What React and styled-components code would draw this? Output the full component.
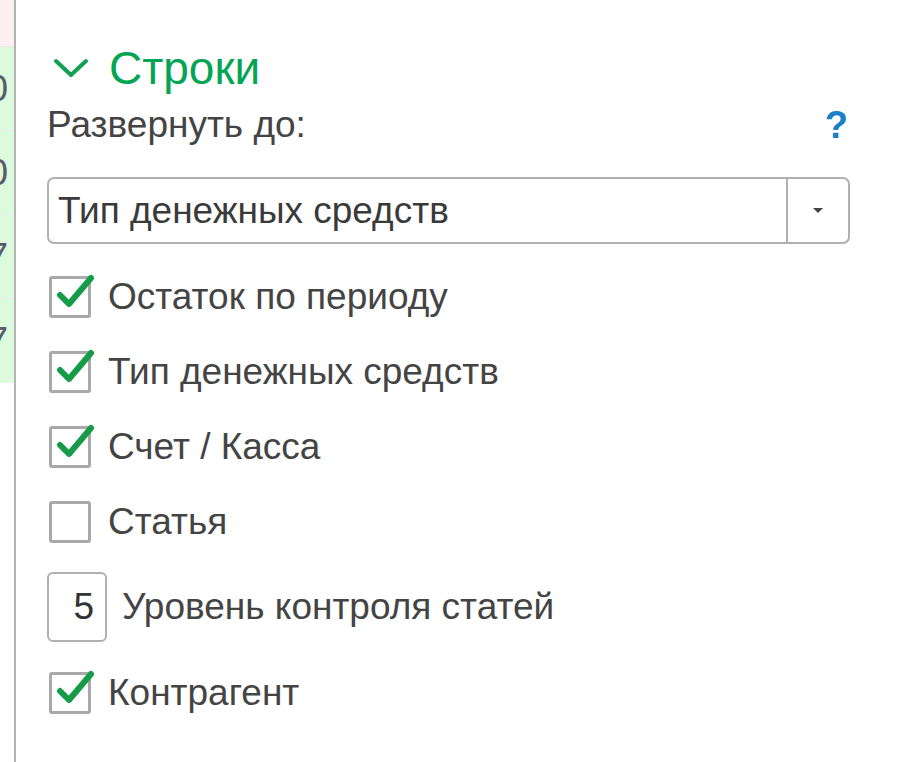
import React from 'react';
import styled, { createGlobalStyle } from 'styled-components';

const Global = createGlobalStyle`
  html, body {
    margin: 0;
    padding: 0;
    background: #fff;
  }
  body {
    font-family: "Liberation Sans", Arial, sans-serif;
    color: #444;
  }
`;

const Page = styled.div`
  display: flex;
  height: 762px;
  width: 900px;
  overflow: hidden;
`;

const TableStrip = styled.div`
  width: 14px;
  flex: none;
  border-right: 2px solid #b3b3b3;
  display: flex;
  flex-direction: column;
`;

const Cell = styled.div`
  height: ${p => p.h}px;
  flex: none;
  background: ${p => p.bg};
  border-bottom: 1px solid ${p => p.line};
  overflow: hidden;
  display: flex;
  align-items: center;
  justify-content: flex-end;
  padding-right: 6px;
  font-size: 37px;
  color: #5a5a6a;
  white-space: nowrap;
`;

const Panel = styled.div`
  flex: 1;
  padding: 40px 50px 0 31px;
  display: flex;
  flex-direction: column;
`;

const Header = styled.div`
  height: 56px;
  display: flex;
  align-items: center;
  gap: 20px;
  padding-left: 6px;
  color: #04a455;
  font-size: 46px;
`;

const LabelRow = styled.div`
  height: 58px;
  display: flex;
  align-items: center;
  justify-content: space-between;
  font-size: 37px;
`;

const Help = styled.span`
  color: #1a80c8;
  font-weight: bold;
  font-size: 38px;
  margin-right: 2px;
`;

const Select = styled.div`
  margin-top: 23px;
  height: 67px;
  box-sizing: border-box;
  border: 2px solid #b0b0b0;
  border-radius: 7px;
  display: flex;
  align-items: stretch;
  font-size: 37px;
  color: #3a3a3a;
`;

const SelectValue = styled.div`
  flex: 1;
  display: flex;
  align-items: center;
  padding-left: 9px;
`;

const SelectButton = styled.div`
  width: 60px;
  border-left: 2px solid #b0b0b0;
  display: flex;
  align-items: center;
  justify-content: center;
`;

const Arrow = styled.div`
  width: 0;
  height: 0;
  border-left: 5px solid transparent;
  border-right: 5px solid transparent;
  border-top: 5px solid #444;
`;

const Row = styled.div`
  height: ${p => p.h}px;
  display: flex;
  align-items: center;
  gap: ${p => p.gap || 17}px;
  font-size: 37px;
  color: #444;
`;

const Box = styled.div`
  position: relative;
  width: 42px;
  height: 42px;
  margin-left: 2px;
  box-sizing: border-box;
  border: 3px solid #a9a9a9;
  border-radius: 3px;
  flex: none;
`;

const Tick = styled.svg`
  position: absolute;
  left: 4px;
  top: -6px;
`;

const NumField = styled.div`
  width: 60px;
  height: 70px;
  box-sizing: border-box;
  border: 2px solid #b0b0b0;
  border-radius: 6px;
  display: flex;
  align-items: center;
  justify-content: flex-end;
  padding-right: 11px;
  font-size: 37px;
  color: #333;
  flex: none;
`;

function Check({ on, label }) {
  return (
    <Row h={75}>
      <Box>
        {on && (
          <Tick width="42" height="36" viewBox="0 0 42 36">
            <path d="M4 22 L13 31 L35 5" fill="none" stroke="#169c48" strokeWidth="6" strokeLinecap="round" strokeLinejoin="round" />
          </Tick>
        )}
      </Box>
      <span>{label}</span>
    </Row>
  );
}

const rows = [
  { h: 46, bg: '#fdf0f3', line: '#f4e4e8', t: '' },
  { h: 83, bg: '#dcfadc', line: '#e6eee6', t: '1 200,00' },
  { h: 83, bg: '#dcfadc', line: '#e6eee6', t: '1 200,00' },
  { h: 83, bg: '#dcfadc', line: '#e6eee6', t: '2 417' },
  { h: 83, bg: '#dcfadc', line: '#dcfadc', t: '2 417' },
];

export default function App() {
  return (
    <Page>
      <Global />
      <TableStrip>
        {rows.map((r, i) => (
          <Cell key={i} h={r.h} bg={r.bg} line={r.line}>{r.t}</Cell>
        ))}
      </TableStrip>
      <Panel>
        <Header>
          <svg width="36" height="20" viewBox="0 0 36 20">
            <path d="M3 3 L18 17 L33 3" fill="none" stroke="#12a052" strokeWidth="4" strokeLinecap="round" strokeLinejoin="round" />
          </svg>
          <span>Строки</span>
        </Header>
        <LabelRow>
          <span>Развернуть до:</span>
          <Help>?</Help>
        </LabelRow>
        <Select>
          <SelectValue>Тип денежных средств</SelectValue>
          <SelectButton><Arrow /></SelectButton>
        </Select>
        <div style={{ height: 15 }} />
        <Check on label="Остаток по периоду" />
        <Check on label="Тип денежных средств" />
        <Check on label="Счет / Касса" />
        <Check label="Статья" />
        <Row h={96} gap={15}>
          <NumField>5</NumField>
          <span>Уровень контроля статей</span>
        </Row>
        <Check on label="Контрагент" />
      </Panel>
    </Page>
  );
}
